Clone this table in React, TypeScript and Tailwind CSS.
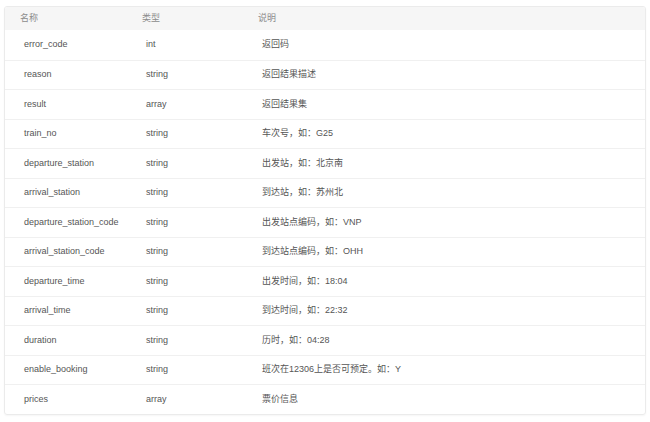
import React from "react";

const rows = [
  ["error_code", "int", "返回码"],
  ["reason", "string", "返回结果描述"],
  ["result", "array", "返回结果集"],
  ["train_no", "string", "车次号，如：G25"],
  ["departure_station", "string", "出发站，如：北京南"],
  ["arrival_station", "string", "到达站，如：苏州北"],
  ["departure_station_code", "string", "出发站点编码，如：VNP"],
  ["arrival_station_code", "string", "到达站点编码，如：OHH"],
  ["departure_time", "string", "出发时间，如：18:04"],
  ["arrival_time", "string", "到达时间，如：22:32"],
  ["duration", "string", "历时，如：04:28"],
  ["enable_booking", "string", "班次在12306上是否可预定。如：Y"],
  ["prices", "array", "票价信息"],
];

const App = () => {
  return (
    <div className="w-[650px] h-[422px] bg-white pt-[6px] px-[4px] font-['Liberation_Sans','Noto_Sans_CJK_SC',sans-serif]">
      <div className="w-[642px] border border-[#ebebeb] rounded-[3px] shadow-[0_1px_2px_rgba(0,0,0,0.04)] overflow-hidden">
        <div className="flex h-[23px] items-center bg-[#f6f6f6] text-[9px] text-[#8c8c8c]">
          <div className="w-[121px] pl-[15px]">名称</div>
          <div className="w-[116px] pl-[16px]">类型</div>
          <div className="pl-[16px]">说明</div>
        </div>
        {rows.map((r, i) => (
          <div
            key={r[0]}
            className={
              "flex h-[29.5px] items-center text-[9px] text-[#555] " +
              (i > 0 ? "border-t border-[#f0f0f0]" : "")
            }
          >
            <div className="w-[121px] pl-[19px]">{r[0]}</div>
            <div className="w-[116px] pl-[20px]">{r[1]}</div>
            <div className="pl-[20px]">{r[2]}</div>
          </div>
        ))}
      </div>
    </div>
  );
};

export default App;
